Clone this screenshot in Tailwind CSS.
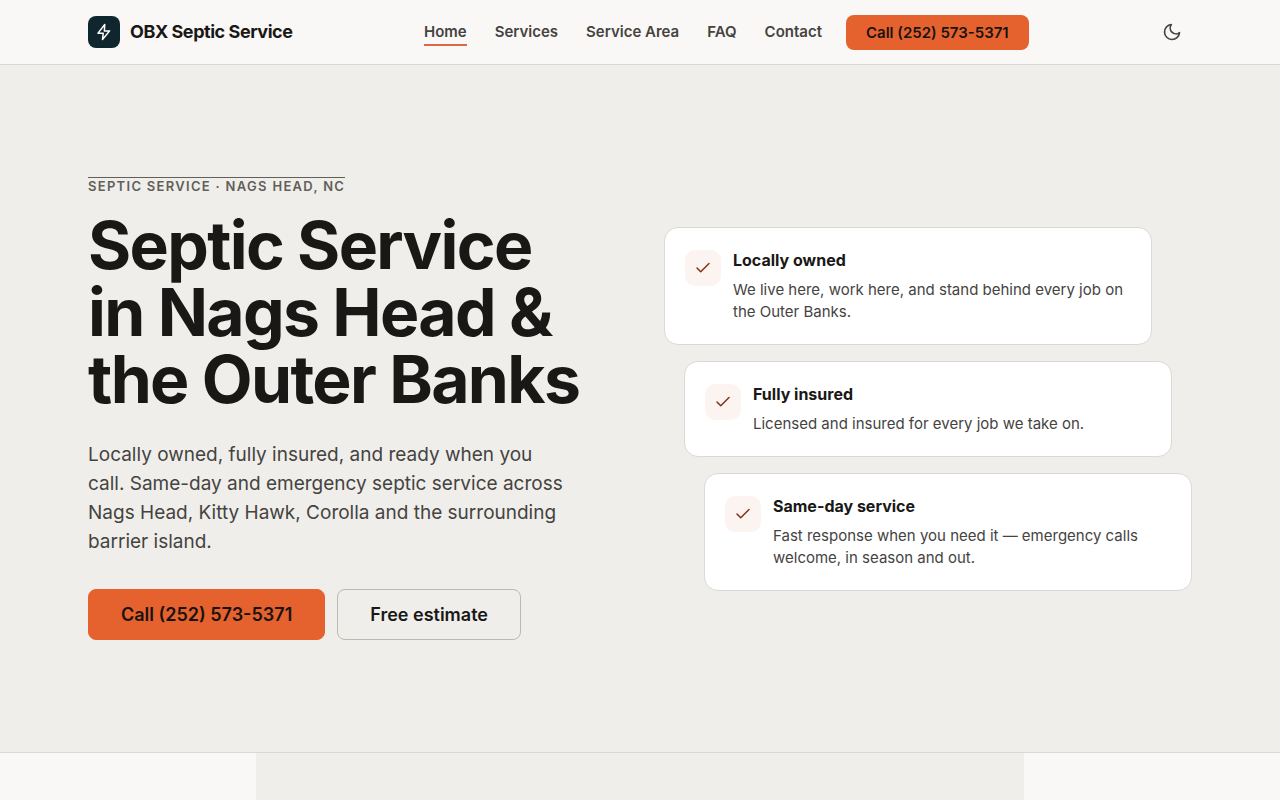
<!DOCTYPE html>
<html lang="en">
<head>
    <meta charset="UTF-8">
    <meta name="viewport" content="width=device-width, initial-scale=1.0">
    <title>OBX Septic Service</title>
    <script src="https://cdn.jsdelivr.net/npm/@tailwindcss/browser@4"></script>
</head>
<body class="flex min-h-screen flex-col bg-[#f9f8f6] font-['Inter',sans-serif] text-[#191816]">
    <header class="border-b border-[#dad9d6] px-6">
        <div class="mx-auto grid h-16 max-w-[1104px] grid-cols-[336px_1fr_auto] items-center">
            <a href="#" class="flex items-center gap-[10px]">
                <span class="flex size-8 items-center justify-center rounded-lg bg-[#10262e] text-white">
                    <svg class="size-[18px]" viewBox="0 0 24 24" fill="none" stroke="currentColor" stroke-width="2" stroke-linecap="round" stroke-linejoin="round" aria-hidden="true"><path d="M13 2 4 13.5h7L10 22l9.5-11.5H12.5z"/></svg>
                </span>
                <span class="text-lg font-bold tracking-tight">OBX Septic Service</span>
            </a>
            <nav class="flex items-center gap-6">
                <div class="flex items-center gap-7 text-[15px] font-semibold leading-6 text-[#45433f]">
                    <a href="#" class="border-y-2 border-t-transparent border-b-[#dc6743]" aria-current="page">Home</a>
                    <a href="#">Services</a>
                    <a href="#">Service Area</a>
                    <a href="#">FAQ</a>
                    <a href="#">Contact</a>
                </div>
                <a href="tel:2525735371" class="rounded-lg bg-[#e5622e] px-5 py-[6px] text-[15px] font-semibold leading-[23px] text-[#191310]">Call (252) 573-5371</a>
            </nav>
            <button type="button" aria-label="Switch to dark mode" class="flex size-10 items-center justify-center text-[#45433f]">
                <svg class="size-5" viewBox="0 0 24 24" fill="none" stroke="currentColor" stroke-width="2" stroke-linecap="round" stroke-linejoin="round" aria-hidden="true"><path d="M21 12.79A9 9 0 1 1 11.21 3 7 7 0 0 0 21 12.79z"/></svg>
            </button>
        </div>
    </header>

    <section class="border-b border-[#dad9d6] bg-[#efeeea] px-6 py-28">
        <div class="mx-auto grid max-w-[1104px] grid-cols-2 items-center gap-12">
            <div>
                <p class="mb-[18px] w-fit border-t border-[#625f59] text-[13px] font-semibold uppercase leading-4 tracking-widest text-[#625f59]">Septic service · Nags Head, NC</p>
                <h1 class="text-[66px] font-bold leading-[67px] tracking-tight">Septic Service<br>in Nags Head &amp;<br>the Outer Banks</h1>
                <p class="mt-[27px] max-w-[480px] text-[19px] leading-[29px] text-[#45433f]">Locally owned, fully insured, and ready when you call. Same-day and emergency septic service across Nags Head, Kitty Hawk, Corolla and the surrounding barrier island.</p>
                <div class="mt-[33px] flex gap-3 text-lg font-semibold leading-[27px]">
                    <a href="tel:2525735371" class="rounded-lg border border-[#e5622e] bg-[#e5622e] px-8 py-[11px] text-[#191310]">Call (252) 573-5371</a>
                    <a href="#" class="rounded-lg border border-[#bdb9b2] px-8 py-[11px]">Free estimate</a>
                </div>
            </div>

            <!-- Stepped trust cards -->
            <ul class="flex flex-col gap-4">
                <li class="mr-10 flex gap-3 rounded-[14px] border border-[#dad9d6] bg-white px-5 pt-[22px] pb-[21px]">
                    <span class="flex size-9 shrink-0 items-center justify-center rounded-[10px] bg-[#fcf4f1] text-[#873013]">
                        <svg class="size-[18px]" viewBox="0 0 24 24" fill="none" stroke="currentColor" stroke-width="2" stroke-linecap="round" stroke-linejoin="round" aria-hidden="true"><path d="M20 6 9 17l-5-5"/></svg>
                    </span>
                    <div>
                        <h2 class="text-base font-bold leading-5">Locally owned</h2>
                        <p class="mt-[9px] text-[15px] leading-[22px] text-[#45433f]">We live here, work here, and stand behind every job on the Outer Banks.</p>
                    </div>
                </li>
                <li class="mx-5 flex gap-3 rounded-[14px] border border-[#dad9d6] bg-white px-5 pt-[22px] pb-[21px]">
                    <span class="flex size-9 shrink-0 items-center justify-center rounded-[10px] bg-[#fcf4f1] text-[#873013]">
                        <svg class="size-[18px]" viewBox="0 0 24 24" fill="none" stroke="currentColor" stroke-width="2" stroke-linecap="round" stroke-linejoin="round" aria-hidden="true"><path d="M20 6 9 17l-5-5"/></svg>
                    </span>
                    <div>
                        <h2 class="text-base font-bold leading-5">Fully insured</h2>
                        <p class="mt-[9px] text-[15px] leading-[22px] text-[#45433f]">Licensed and insured for every job we take on.</p>
                    </div>
                </li>
                <li class="ml-10 flex gap-3 rounded-[14px] border border-[#dad9d6] bg-white px-5 pt-[22px] pb-[21px]">
                    <span class="flex size-9 shrink-0 items-center justify-center rounded-[10px] bg-[#fcf4f1] text-[#873013]">
                        <svg class="size-[18px]" viewBox="0 0 24 24" fill="none" stroke="currentColor" stroke-width="2" stroke-linecap="round" stroke-linejoin="round" aria-hidden="true"><path d="M20 6 9 17l-5-5"/></svg>
                    </span>
                    <div>
                        <h2 class="text-base font-bold leading-5">Same-day service</h2>
                        <p class="mt-[9px] text-[15px] leading-[22px] text-[#45433f]">Fast response when you need it — emergency calls welcome, in season and out.</p>
                    </div>
                </li>
            </ul>
        </div>
    </section>

    <div class="mx-auto w-3/5 flex-1 bg-[#efeeea]"></div>
</body>
</html>
